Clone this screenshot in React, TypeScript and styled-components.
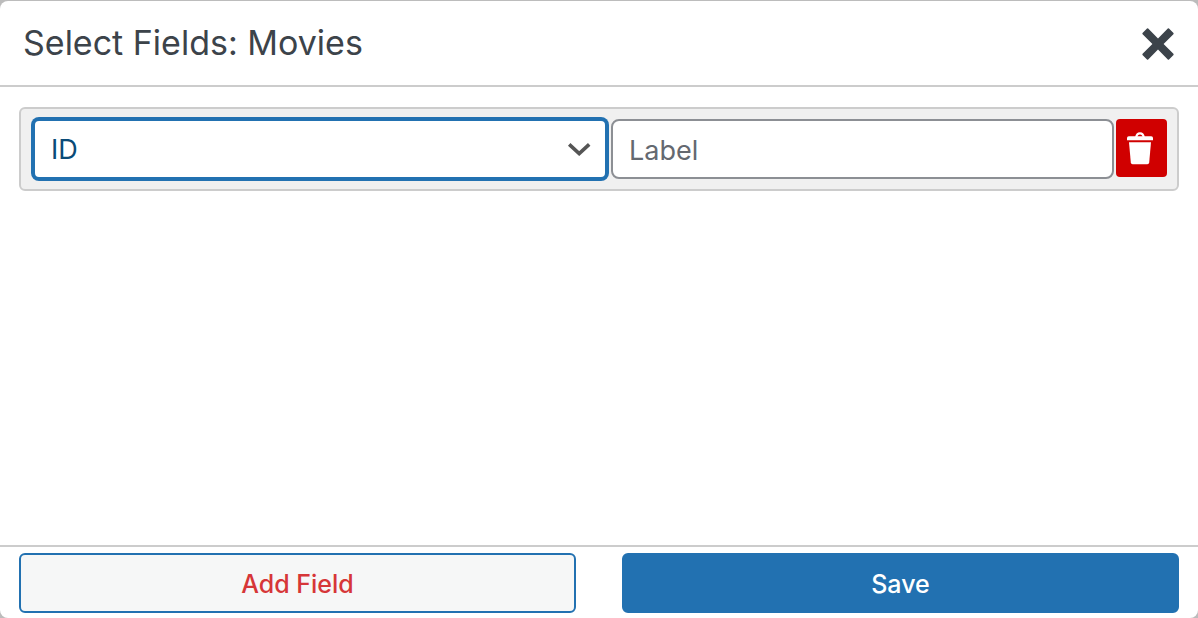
import React, { useState } from "react";
import styled, { createGlobalStyle } from "styled-components";

const GlobalStyle = createGlobalStyle`
  *, *::before, *::after { box-sizing: border-box; }
  body {
    margin: 0;
    background: #bcbcbc;
    font-family: Inter, "Liberation Sans", sans-serif;
    color: #3c434a;
  }
  button, input, select { font-family: inherit; margin: 0; }
`;

const Page = styled.div`
  display: flex;
  min-height: 100vh;
  padding-top: 1px;
`;

const Dialog = styled.section`
  display: flex;
  flex-direction: column;
  flex: 1;
  min-width: 0;
  background: #fff;
  border-radius: 8px;
`;

const Header = styled.header`
  display: flex;
  align-items: center;
  justify-content: space-between;
  height: 86px;
  padding: 0 23px;
  border-bottom: 2px solid #ccc;
`;

const Title = styled.h1`
  margin: 0;
  font-size: 34px;
  line-height: 44px;
  font-weight: 400;
`;

const CloseButton = styled.button`
  display: flex;
  padding: 2px 0 0;
  border: 0;
  background: none;
  color: #3c434a;
  cursor: pointer;
`;

const Body = styled.main`
  flex: 1;
  padding: 20px 19px;
`;

const FieldRow = styled.div`
  display: grid;
  grid-template-columns: minmax(0, 576fr) minmax(0, 503fr) 51px;
  gap: 2px;
  align-items: start;
  padding: 10px 10px 10px 12px;
  border: 2px solid #ccc;
  border-radius: 6px;
  background: #f0f0f0;
`;

const SelectWrap = styled.div`
  display: grid;
  margin-right: 2px;
  align-items: center;

  > * { grid-area: 1 / 1; }
  > svg { justify-self: end; margin-right: 16px; pointer-events: none; }
`;

const FieldSelect = styled.select`
  appearance: none;
  width: 100%;
  height: 60px;
  padding: 2px 48px 0 16px;
  border: 2px solid #2271b1;
  border-radius: 6px;
  box-shadow: 0 0 0 2px #2271b1;
  outline: 0;
  background: #fff;
  color: #0a4b78;
  font-size: 27px;
  line-height: 36px;
`;

const LabelInput = styled.input`
  width: 100%;
  height: 60px;
  padding: 2px 16px 0;
  border: 2px solid #8c8f94;
  border-radius: 8px;
  background: #fff;
  color: #2c3338;
  font-size: 27px;
  line-height: 36px;

  &::placeholder { color: #646970; opacity: 1; }
`;

const DeleteButton = styled.button`
  display: flex;
  align-items: center;
  justify-content: center;
  height: 58px;
  padding: 0 3px 0 0;
  border: 0;
  border-radius: 4px;
  background: #d00000;
  color: #fff;
  cursor: pointer;
`;

const Footer = styled.footer`
  display: grid;
  grid-template-columns: 1fr 1fr;
  gap: 46px;
  padding: 6px 19px 5px;
  border-top: 2px solid #ccc;
`;

const ActionButton = styled.button<{ $primary?: boolean }>`
  height: 60px;
  padding: 2px 20px 0;
  border: 2px solid #2271b1;
  border-radius: 6px;
  background: ${(p) => (p.$primary ? "#2271b1" : "#f6f7f7")};
  color: ${(p) => (p.$primary ? "#fff" : "#d63638")};
  font-size: 25px;
  line-height: 36px;
  font-weight: 500;
  cursor: pointer;
`;

const CloseIcon = () => (
  <svg width="33" height="32" viewBox="0 0 33 32" fill="currentColor" aria-hidden="true">
    <path d="M5 .5Q5.6 .1 6.2 .6L16 10.4 25.8 .6Q26.4 .1 27 .5L31.5 5Q31.9 5.6 31.4 6.2L21.6 16 31.4 25.8Q31.9 26.4 31.5 27L27 31.5Q26.4 31.9 25.8 31.4L16 21.6 6.2 31.4Q5.6 31.9 5 31.5L.5 27Q.1 26.4 .6 25.8L10.4 16 .6 6.2Q.1 5.6 .5 5Z" />
  </svg>
);

const ChevronIcon = () => (
  <svg width="24" height="14" viewBox="0 0 24 14" fill="none" stroke="#555" strokeWidth="3.6" aria-hidden="true">
    <path d="M2.2 2.4 12.2 11.6 22.2 2.4" />
  </svg>
);

const TrashIcon = () => (
  <svg width="28" height="34" viewBox="0 0 28 34" fill="currentColor" aria-hidden="true">
    <path d="M9.2 6C9.6 3 11.2 1.2 14 1.2S18.4 3 18.8 6H16.6C16.4 4.5 15.6 3.6 14 3.6S11.6 4.5 11.4 6Z" />
    <path d="M2.8 5.2H25.2Q27 5.2 27 7V9.2H1V7Q1 5.2 2.8 5.2Z" />
    <path d="M3 11.3H25L23.2 31.4Q23 33.2 21.4 33.2H6.6Q5 33.2 4.8 31.4Z" />
  </svg>
);

export default function App() {
  const [label, setLabel] = useState("");
  return (
    <>
      <GlobalStyle />
      <Page>
        <Dialog role="dialog" aria-labelledby="dialog-title">
          <Header>
            <Title id="dialog-title">Select Fields: Movies</Title>
            <CloseButton type="button" aria-label="Close">
              <CloseIcon />
            </CloseButton>
          </Header>
          <Body>
            <FieldRow>
              <SelectWrap>
                <FieldSelect aria-label="Field" defaultValue="id">
                  <option value="id">ID</option>
                </FieldSelect>
                <ChevronIcon />
              </SelectWrap>
              <LabelInput
                type="text"
                aria-label="Label"
                placeholder="Label"
                value={label}
                onChange={(e) => setLabel(e.target.value)}
              />
              <DeleteButton type="button" aria-label="Delete field">
                <TrashIcon />
              </DeleteButton>
            </FieldRow>
          </Body>
          <Footer>
            <ActionButton type="button">Add Field</ActionButton>
            <ActionButton type="button" $primary>
              Save
            </ActionButton>
          </Footer>
        </Dialog>
      </Page>
    </>
  );
}
